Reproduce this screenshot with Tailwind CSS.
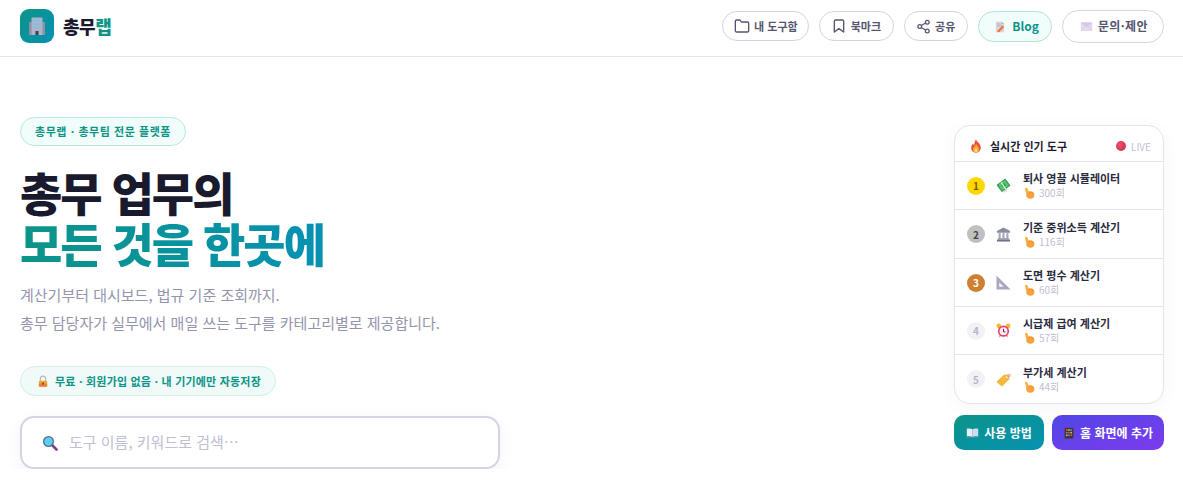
<!DOCTYPE html>
<html lang="ko">
<head>
  <meta charset="UTF-8">
  <title>총무랩</title>
  <meta name="viewport" content="width=device-width, initial-scale=1" />
  <script src="https://cdn.jsdelivr.net/npm/@tailwindcss/browser@4"></script>
</head>
<body class="bg-white overflow-hidden font-['Noto_Sans_CJK_KR','Noto_Sans',sans-serif] text-[#1a1a2e]">

  <!-- emoji drawings -->
  <svg class="hidden">
    <symbol id="e-hand" viewBox="0 0 16 16">
      <rect x="3.600" y="0.800" width="3.600" height="10" rx="1.800" fill="#fbb040" transform="rotate(-18 5.400 5.800)"/>
      <ellipse cx="9.800" cy="10.600" rx="5.400" ry="5" fill="#f9a13a"/>
      <path d="M8 6.800c1-.5 1.800 0 2 .8.700-.5 1.700-.2 2 .6.800-.2 1.500.2 1.800 1" fill="none" stroke="#e58a26" stroke-width=".7"/>
    </symbol>
    <symbol id="e-fire" viewBox="0 0 16 16">
      <path d="M8 .5c.6 2.300 5.500 4.700 5.500 9.300 0 3.500-2.500 5.900-5.500 5.900s-5.500-2.400-5.500-5.600c0-2.200 1.100-3.700 2.200-4.900.2 1.100.6 1.800 1.300 2.100C6 5 6.600 2.400 8 .5z" fill="#e8533a"/>
      <path d="M8.200 5.800c.5 1.900 3.300 3.100 3.300 5.900 0 2.300-1.700 3.800-3.500 3.800s-3.500-1.500-3.500-3.500c0-2.700 3.100-3.700 3.700-6.200z" fill="#fba62f"/>
      <path d="M8 10c.4 1.100 1.700 1.700 1.700 3 0 1.200-.8 2-1.700 2s-1.700-.8-1.700-1.900c0-1.400 1.400-1.900 1.700-3.100z" fill="#fddc6b"/>
    </symbol>
    <symbol id="e-building" viewBox="0 0 20 20">
      <rect x="2" y="6" width="4" height="13" fill="#8e8ea5"/>
      <rect x="14" y="6" width="4" height="13" fill="#8e8ea5"/>
      <rect x="4.500" y="1.500" width="11" height="17.500" fill="#b3b2c6"/>
      <g fill="#6fc5f2">
        <rect x="6" y="3.500" width="2" height="2"/><rect x="9" y="3.500" width="2" height="2"/><rect x="12" y="3.500" width="2" height="2"/>
        <rect x="6" y="7" width="2" height="2"/><rect x="9" y="7" width="2" height="2"/><rect x="12" y="7" width="2" height="2"/>
        <rect x="6" y="10.500" width="2" height="2"/><rect x="9" y="10.500" width="2" height="2"/><rect x="12" y="10.500" width="2" height="2"/>
      </g>
      <rect x="8.500" y="15" width="3" height="4" fill="#3f3f52"/>
    </symbol>
    <symbol id="e-money" viewBox="0 0 16 16">
      <path d="M4.500 13l2 2.500 1.300-1.300 1.200 1.500 1.300-1.500 1.200.8.500-3.500-4-2z" fill="#d3d6de"/>
      <path d="M.5 7.500L9.800.5 15.500 8 6.200 15z" fill="#2e9e52"/>
      <path d="M2.300 7.500L9.500 2.200 13.700 8 6.500 13.300z" fill="#5cc46f"/>
      <circle cx="8" cy="7.800" r="2.200" fill="#2e9e52"/>
      <path d="M5 5l4.800 7.200 1.100-.8-4.800-7.200z" fill="#eef3df"/>
    </symbol>
    <symbol id="e-bank" viewBox="0 0 16 16">
      <path d="M8 .5L1 4.300V6h14V4.300z" fill="#8a8aa0"/>
      <g fill="#a9a8bd"><rect x="2.700" y="6.500" width="2.300" height="5.500"/><rect x="6.850" y="6.500" width="2.300" height="5.500"/><rect x="11" y="6.500" width="2.300" height="5.500"/></g>
      <rect x="2" y="12" width="12" height="1.500" fill="#8a8aa0"/>
      <rect x="1" y="13.500" width="14" height="2" fill="#71718a"/>
    </symbol>
    <symbol id="e-ruler" viewBox="0 0 16 16">
      <path fill-rule="evenodd" d="M.5.500v15h15zM3.500 8v4.500h4.500z" fill="#a9a8bd"/>
    </symbol>
    <symbol id="e-clock" viewBox="0 0 16 16">
      <circle cx="3" cy="3" r="2.500" fill="#f5b92e"/><circle cx="13" cy="3" r="2.500" fill="#f5b92e"/>
      <path d="M3.500 15l1.500-2.200M12.500 15L11 12.800" stroke="#b3b2c6" stroke-width="1.300"/>
      <circle cx="8" cy="8.700" r="6" fill="#ec3f6b"/><circle cx="8" cy="8.700" r="4.200" fill="#f7eff2"/>
      <path d="M8 6v2.900l2 1" stroke="#7b2d45" stroke-width="1.100" fill="none"/>
    </symbol>
    <symbol id="e-tag" viewBox="0 0 16 16">
      <path d="M1 9.800L8.500 3l5-.5 1 5L7 14.800c-.5.4-1 .4-1.400 0L1 11.300c-.4-.5-.4-1 0-1.500z" fill="#f7b93c"/>
      <circle cx="11.500" cy="5.300" r="1.100" fill="#fff"/>
      <path d="M11.500 5.300c1-1.900 3-3.300 3.800-2.100.6 1.100-1.200 2.100-2.100 1.600" stroke="#d682a8" stroke-width=".9" fill="none"/>
    </symbol>
    <symbol id="e-memo" viewBox="0 0 16 16">
      <path d="M2.500 1h8l3 3v11h-11z" fill="#d9d4de"/>
      <path d="M10.500 1v3h3z" fill="#b5b0bd"/>
      <path d="M4 4h5M4 6.500h7" stroke="#a9a4b3" stroke-width=".9"/>
      <path d="M5 12.500l6.500-6.500 2 2L7 14.500l-2.500.5z" fill="#f0702e"/>
    </symbol>
    <symbol id="e-mail" viewBox="0 0 16 16">
      <rect x="1" y="3" width="14" height="10.500" fill="#e4d8ef"/>
      <path d="M1 3l7 5.500L15 3z" fill="#d5c4e6"/>
      <path d="M1 13.500L6.500 7.500M15 13.500L9.500 7.500" stroke="#d5c4e6" stroke-width=".7"/>
    </symbol>
    <symbol id="e-book" viewBox="0 0 16 16">
      <path d="M1 3.500c2.300-.7 5-.6 7 .5v9.500c-2-1-4.700-1.200-7-.5z" fill="#e9eef6"/>
      <path d="M15 3.500c-2.300-.7-5-.6-7 .5v9.500c2-1 4.700-1.200 7-.5z" fill="#cfdcef"/>
      <path d="M.5 13.800h15" stroke="#6b8fc4" stroke-width=".9"/>
    </symbol>
    <symbol id="e-abacus" viewBox="0 0 16 16">
      <rect x="2" y="1" width="12" height="14.500" fill="#5b3a2e"/>
      <rect x="3.300" y="2.300" width="9.400" height="12" fill="#2d3142"/>
      <g>
        <rect x="4" y="3" width="2.200" height="2.200" fill="#e8533a"/><rect x="6.900" y="3" width="2.200" height="2.200" fill="#f5b92e"/><rect x="9.800" y="3" width="2.200" height="2.200" fill="#3fa7d6"/>
        <rect x="4" y="6.500" width="2.200" height="2.200" fill="#3fa7d6"/><rect x="6.900" y="6.500" width="2.200" height="2.200" fill="#e8533a"/><rect x="9.800" y="6.500" width="2.200" height="2.200" fill="#f5b92e"/>
        <rect x="4" y="10" width="2.200" height="2.200" fill="#f5b92e"/><rect x="6.900" y="10" width="2.200" height="2.200" fill="#3fa7d6"/><rect x="9.800" y="10" width="2.200" height="2.200" fill="#e8533a"/>
      </g>
    </symbol>
    <symbol id="e-lock" viewBox="0 0 16 16">
      <path d="M4.500 8V5a3.500 3.500 0 017 0v3" stroke="#b9b8c8" stroke-width="1.600" fill="none"/>
      <rect x="2.500" y="7.500" width="11" height="8" rx="1" fill="#f7a531"/>
      <rect x="2.500" y="11.500" width="11" height="4" fill="#ee7f3a"/>
      <rect x="7" y="9.500" width="2" height="3.500" rx="1" fill="#5a3a2a"/>
    </symbol>
    <symbol id="e-search" viewBox="0 0 16 16">
      <path d="M10 10l4.500 4.500" stroke="#7b3f91" stroke-width="2.600" stroke-linecap="round"/>
      <circle cx="6.500" cy="6.500" r="5.500" fill="#4d6f8c"/>
      <circle cx="6.500" cy="6.500" r="4.200" fill="#5fcdf0"/>
    </symbol>
  </svg>

  <header class="h-[57px] border-b border-[#e4e4ee] flex items-center justify-between pl-5 pr-[19px] pb-[4px]">
    <div class="flex items-center gap-[9px]">
      <div class="w-[34px] h-[34px] rounded-[9px] bg-gradient-to-br from-[#0d9488] to-[#0891b2] flex items-center justify-center">
        <svg class="w-[20px] h-[20px]"><use href="#e-building"/></svg>
      </div>
      <span class="text-[18px] font-extrabold tracking-[-0.5px] text-[#1a1a2e]">총무<span class="text-[#0d9488]">랩</span></span>
    </div>
    <nav class="flex items-center gap-[10px]">
      <a class="h-[30px] pl-[11px] pr-[10px] rounded-full border border-[#d4d4e4] flex items-center gap-[4px] text-[11px] font-semibold text-[#555570]">
        <svg class="w-[16px] h-[16px]" viewBox="0 0 24 24" fill="none" stroke="#555570" stroke-width="2" stroke-linecap="round" stroke-linejoin="round"><path d="M22 19a2 2 0 0 1-2 2H4a2 2 0 0 1-2-2V5a2 2 0 0 1 2-2h5l2 3h9a2 2 0 0 1 2 2z"/></svg>
        내 도구함
      </a>
      <a class="h-[30px] pl-[11px] pr-[12px] rounded-full border border-[#d4d4e4] flex items-center gap-[4px] text-[11px] font-semibold text-[#555570]">
        <svg class="w-[16px] h-[16px]" viewBox="0 0 24 24" fill="none" stroke="#555570" stroke-width="2" stroke-linecap="round" stroke-linejoin="round"><path d="M19 21l-7-5-7 5V5a2 2 0 0 1 2-2h10a2 2 0 0 1 2 2z"/></svg>
        북마크
      </a>
      <a class="h-[30px] pl-[11px] pr-[12px] rounded-full border border-[#d4d4e4] flex items-center gap-[4px] text-[11px] font-semibold text-[#555570]">
        <svg class="w-[15px] h-[15px]" viewBox="0 0 24 24" fill="none" stroke="#555570" stroke-width="2" stroke-linecap="round" stroke-linejoin="round"><circle cx="18" cy="5" r="3"/><circle cx="6" cy="12" r="3"/><circle cx="18" cy="19" r="3"/><path d="M8.590 13.510l6.830 3.980M15.410 6.510l-6.820 3.980"/></svg>
        공유
      </a>
      <a class="h-[31px] pl-[15px] pr-[12px] rounded-full border border-[#b2e4d8] bg-[#f0fdfa] flex items-center gap-[6px] text-[12px] font-bold text-[#0d9488]">
        <svg class="w-[12px] h-[12px] mt-[1px]"><use href="#e-memo"/></svg>
        Blog
      </a>
      <a class="h-[33px] pl-[17px] pr-[15px] rounded-full border border-[#d4d4e4] flex items-center gap-[5px] text-[12px] font-semibold tracking-[0.4px] text-[#555570]">
        <svg class="w-[13px] h-[13px]"><use href="#e-mail"/></svg>
        문의·제안
      </a>
    </nav>
  </header>

  <main class="flex justify-between pl-5 pr-[19px]">
    <section class="w-[480px] pt-[60px]">
      <div class="inline-flex items-center h-[29px] px-[14px] rounded-full border border-[#b8e8de] bg-[#f0fdfa] text-[11px] font-bold tracking-[0.55px] text-[#0d9488]">총무랩 · 총무팀 전문 플랫폼</div>
      <h1 class="mt-[20px] text-[46px] leading-[51px] font-black tracking-[-2px] text-[#1a1a2e] whitespace-nowrap">
        총무 업무의<br>
        <span class="bg-gradient-to-r from-[#0d9488] to-[#0891b2] bg-clip-text text-transparent">모든 것을 한곳에</span>
      </h1>
      <p class="mt-[13px] text-[15px] leading-[28px] text-[#9494ad] whitespace-nowrap">계산기부터 대시보드, 법규 기준 조회까지.<br>총무 담당자가 실무에서 매일 쓰는 도구를 카테고리별로 제공합니다.</p>
      <div class="mt-[29px] inline-flex items-center gap-[6px] h-[30px] pl-[16px] pr-[14px] rounded-full border border-[#d5eee8] bg-[#f0faf8] text-[11px] font-semibold tracking-[0.2px] text-[#0d9488]">
        <svg class="w-[12px] h-[12px]"><use href="#e-lock"/></svg>
        무료 · 회원가입 없음 · 내 기기에만 자동저장
      </div>
      <div class="mt-[20px] h-[53px] rounded-[14px] border-2 border-[#d4d4e4] bg-white shadow-[0_4px_16px_rgba(0,0,0,0.06)] flex items-center gap-[11px] pl-[20px]">
        <svg class="w-[16px] h-[16px]"><use href="#e-search"/></svg>
        <span class="text-[15px] text-[#c0c0d0]">도구 이름, 키워드로 검색…</span>
      </div>
    </section>

    <aside class="w-[210px] pt-[68px]">
      <div class="rounded-[16px] border border-[#e4e4ee] bg-white shadow-[0_4px_20px_rgba(0,0,0,0.04)] overflow-hidden">
        <div class="h-[36px] pt-[5px] border-b border-[#e4e4ee] flex items-center pl-[14px] pr-[12px]">
          <svg class="w-[14px] h-[14px]"><use href="#e-fire"/></svg>
          <span class="ml-[7px] text-[11px] font-bold text-[#1a1a2e]">실시간 인기 도구</span>
          <span class="ml-auto w-[10px] h-[10px] rounded-full bg-[radial-gradient(circle_at_35%_35%,#f0506a,#c92a48)]"></span>
          <span class="ml-[5px] text-[10px] text-[#c0c0d0]">LIVE</span>
        </div>
        <div class="h-[48px] border-b border-[#e4e4ee] flex items-center px-[12px]">
          <span class="w-[18px] h-[18px] rounded-full bg-[#ffd700] text-[#7a5c00] text-[10px] font-bold flex items-center justify-center">1</span>
          <svg class="ml-[11px] w-[15px] h-[15px]"><use href="#e-money"/></svg>
          <div class="ml-[12px]">
            <div class="text-[11px] leading-[15px] font-semibold text-[#2a2a3e]">퇴사 영끌 시뮬레이터</div>
            <div class="flex items-center gap-[4px] text-[10px] leading-[14px] text-[#c0c0d0]"><svg class="w-[12px] h-[12px]"><use href="#e-hand"/></svg>300회</div>
          </div>
        </div>
        <div class="h-[49px] border-b border-[#e4e4ee] flex items-center px-[12px]">
          <span class="w-[18px] h-[18px] rounded-full bg-[#c0c0c0] text-[#444] text-[10px] font-bold flex items-center justify-center">2</span>
          <svg class="ml-[11px] w-[15px] h-[15px]"><use href="#e-bank"/></svg>
          <div class="ml-[12px]">
            <div class="text-[11px] leading-[15px] font-semibold text-[#2a2a3e]">기준 중위소득 계산기</div>
            <div class="flex items-center gap-[4px] text-[10px] leading-[14px] text-[#c0c0d0]"><svg class="w-[12px] h-[12px]"><use href="#e-hand"/></svg>116회</div>
          </div>
        </div>
        <div class="h-[48px] border-b border-[#e4e4ee] flex items-center px-[12px]">
          <span class="w-[18px] h-[18px] rounded-full bg-[#cd7f32] text-white text-[10px] font-bold flex items-center justify-center">3</span>
          <svg class="ml-[11px] w-[15px] h-[15px]"><use href="#e-ruler"/></svg>
          <div class="ml-[12px]">
            <div class="text-[11px] leading-[15px] font-semibold text-[#2a2a3e]">도면 평수 계산기</div>
            <div class="flex items-center gap-[4px] text-[10px] leading-[14px] text-[#c0c0d0]"><svg class="w-[12px] h-[12px]"><use href="#e-hand"/></svg>60회</div>
          </div>
        </div>
        <div class="h-[48px] border-b border-[#e4e4ee] flex items-center px-[12px]">
          <span class="w-[18px] h-[18px] rounded-full bg-[#f1f1f6] text-[#b5b5c8] text-[10px] font-bold flex items-center justify-center">4</span>
          <svg class="ml-[11px] w-[15px] h-[15px]"><use href="#e-clock"/></svg>
          <div class="ml-[12px]">
            <div class="text-[11px] leading-[15px] font-semibold text-[#2a2a3e]">시급제 급여 계산기</div>
            <div class="flex items-center gap-[4px] text-[10px] leading-[14px] text-[#c0c0d0]"><svg class="w-[12px] h-[12px]"><use href="#e-hand"/></svg>57회</div>
          </div>
        </div>
        <div class="h-[48px] flex items-center px-[12px]">
          <span class="w-[18px] h-[18px] rounded-full bg-[#f1f1f6] text-[#b5b5c8] text-[10px] font-bold flex items-center justify-center">5</span>
          <svg class="ml-[11px] w-[15px] h-[15px]"><use href="#e-tag"/></svg>
          <div class="ml-[12px]">
            <div class="text-[11px] leading-[15px] font-semibold text-[#2a2a3e]">부가세 계산기</div>
            <div class="flex items-center gap-[4px] text-[10px] leading-[14px] text-[#c0c0d0]"><svg class="w-[12px] h-[12px]"><use href="#e-hand"/></svg>44회</div>
          </div>
        </div>
      </div>
      <div class="mt-[11px] flex gap-[8px]">
        <a class="w-[90px] h-[35px] rounded-[10px] bg-gradient-to-br from-[#0d9488] to-[#0891b2] flex items-center justify-center gap-[5px] text-[12px] font-bold text-white">
          <svg class="w-[13px] h-[13px]"><use href="#e-book"/></svg>사용 방법
        </a>
        <a class="w-[112px] h-[35px] rounded-[10px] bg-gradient-to-br from-[#4f46e5] to-[#7c3aed] flex items-center justify-center gap-[5px] text-[12px] font-bold text-white">
          <svg class="w-[12px] h-[12px]"><use href="#e-abacus"/></svg>홈 화면에 추가
        </a>
      </div>
    </aside>
  </main>

</body>
</html>
